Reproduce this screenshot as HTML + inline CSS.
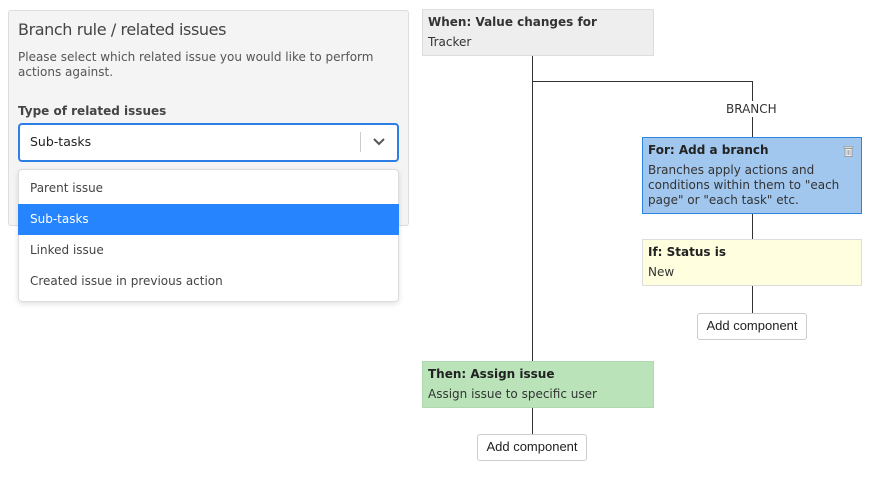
<!DOCTYPE html>
<html><head><style>
*{box-sizing:border-box;margin:0;padding:0}
body{width:874px;height:477px;background:#fff;position:relative;font-family:"DejaVu Sans",Verdana,sans-serif;color:#333;overflow:hidden}
.a{position:absolute}
.t{font-size:12px;letter-spacing:0;white-space:nowrap}
.b{font-weight:bold}
.ln{position:absolute;background:#333}
.btn{position:absolute;background:#fff;border:1px solid #ccc;border-radius:3px;font-family:"Liberation Sans",Arial,sans-serif;font-size:13px;color:#222;text-align:center;line-height:24px}
</style></head><body>
<div class="a" style="left:8px;top:10px;width:401px;height:216px;background:#f4f4f4;border:1px solid #ddd;border-radius:3px"></div>
<div class="a" style="left:18px;top:20px;font-size:16px;color:#444;letter-spacing:-0.4px;white-space:nowrap">Branch rule / related issues</div>
<div class="a t" style="left:18px;top:50px;color:#555;line-height:15px">Please select which related issue you would like to perform<br>actions against.</div>
<div class="a t b" style="left:18px;top:104px;color:#444">Type of related issues</div>
<div class="a" style="left:18px;top:123px;width:381px;height:39px;background:#fff;border:2px solid #2d7fe6;border-radius:4px"></div>
<div class="a t" style="left:30px;top:134px;font-size:12.5px;color:#222">Sub-tasks</div>
<div class="a" style="left:360px;top:132px;width:1px;height:20px;background:#ccc"></div>
<svg class="a" style="left:372px;top:137px" width="14" height="10"><path d="M2 2 L7 7 L12 2" fill="none" stroke="#555" stroke-width="2"/></svg>
<div class="a" style="left:18px;top:169px;width:381px;height:133px;background:#fff;border:1px solid #ddd;border-radius:4px;box-shadow:0 2px 6px rgba(0,0,0,.12)"></div>
<div class="a t" style="left:30px;top:181px;color:#444">Parent issue</div>
<div class="a" style="left:18px;top:204px;width:381px;height:31px;background:#2684ff"></div>
<div class="a t" style="left:30px;top:212px;color:#fff">Sub-tasks</div>
<div class="a t" style="left:30px;top:243px;color:#444">Linked issue</div>
<div class="a t" style="left:30px;top:274px;color:#444">Created issue in previous action</div>

<div class="ln" style="left:532px;top:55px;width:1px;height:306px"></div>
<div class="ln" style="left:532px;top:81px;width:221px;height:1px"></div>
<div class="ln" style="left:752px;top:81px;width:1px;height:56px"></div>
<div class="a" style="left:722px;top:101px;width:60px;height:16px;background:#fff"></div>
<div class="a t" style="left:726px;top:102px;font-size:12px;color:#333">BRANCH</div>
<div class="ln" style="left:752px;top:213px;width:1px;height:26px"></div>
<div class="ln" style="left:752px;top:285px;width:1px;height:28px"></div>
<div class="ln" style="left:532px;top:407px;width:1px;height:27px"></div>

<div class="a" style="left:422px;top:9px;width:232px;height:47px;background:#eee;border:1px solid #ddd"></div>
<div class="a t b" style="left:428px;top:15px;color:#333">When: Value changes for</div>
<div class="a t" style="left:428px;top:35px;color:#333">Tracker</div>

<div class="a" style="left:642px;top:137px;width:220px;height:77px;background:#a2c7ee;border:1px solid #2a86e2"></div>
<div class="a t b" style="left:648px;top:143px;color:#222">For: Add a branch</div>
<div class="a t" style="left:648px;top:163px;color:#333;line-height:15px">Branches apply actions and<br>conditions within them to "each<br>page" or "each task" etc.</div>
<svg class="a" style="left:843px;top:145px" width="11" height="12"><rect x="1" y="1.5" width="9" height="1.5" fill="#fff" stroke="#888" stroke-width=".6"/><rect x="2" y="3.5" width="7" height="8" fill="#eee" stroke="#888" stroke-width=".7"/><path d="M4 5v5M5.5 5v5M7 5v5" stroke="#888" stroke-width=".6"/></svg>

<div class="a" style="left:642px;top:239px;width:220px;height:47px;background:#ffffe0;border:1px solid #ddd"></div>
<div class="a t b" style="left:648px;top:245px;color:#222">If: Status is</div>
<div class="a t" style="left:648px;top:265px;color:#333">New</div>

<div class="btn" style="left:697px;top:313px;width:110px;height:27px">Add component</div>

<div class="a" style="left:422px;top:361px;width:232px;height:47px;background:#bae3ba;border:1px solid #b0d8b0"></div>
<div class="a t b" style="left:428px;top:367px;color:#222">Then: Assign issue</div>
<div class="a t" style="left:428px;top:387px;color:#333">Assign issue to specific user</div>

<div class="btn" style="left:477px;top:434px;width:110px;height:27px">Add component</div>
</body></html>
